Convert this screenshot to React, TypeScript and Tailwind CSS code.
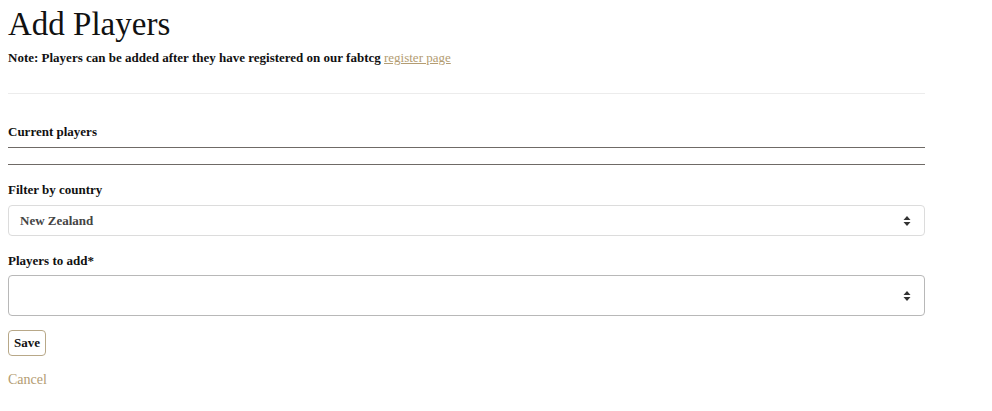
export default function App() {
  const serif = { fontFamily: '"Liberation Serif", "DejaVu Serif", serif' };
  return (
    <div className="min-h-[411px] bg-white text-[#111]" style={serif}>
      <div className="w-[925px] pl-2 pt-1">
        {/* HEADER */}
        <h1 className="text-[33px] leading-[40px]">Add Players</h1>
        <p className="mt-[4px] text-[13px] font-bold leading-5">
          Note: Players can be added after they have registered on our fabtcg{" "}
          <a href="#" className="font-normal text-[#b39c72] underline">
            register page
          </a>
        </p>

        <hr className="mt-[25px] border-t border-[#ececec]" />

        {/* CURRENT PLAYERS */}
        <p className="mt-[28px] text-[13px] font-bold leading-5">Current players</p>
        <div className="mt-[5px] h-px bg-[#6f6a66]" />
        <div className="mt-[16px] h-px bg-[#6f6a66]" />

        {/* FILTER */}
        <label className="mt-[15px] block text-[13px] font-bold leading-5">
          Filter by country
        </label>
        <div className="mt-[5px] flex h-[31px] items-center justify-between rounded border border-[#dcdcdc] pl-[11px] pr-3">
          <span className="text-[13px] font-bold text-[#444]">New Zealand</span>
          <Arrows />
        </div>

        <label className="mt-[15px] block text-[13px] font-bold leading-5">
          Players to add*
        </label>
        <div className="mt-[4px] flex h-[41px] items-center justify-end rounded border border-[#b8b8b8] px-3">
          <Arrows />
        </div>

        {/* ACTIONS */}
        <button className="mt-[14px] rounded-sm border border-[#b8a888] px-[5px] py-[3px] text-[13px] font-bold leading-[18px]">
          Save
        </button>
        <div className="mt-[11px]">
          <a href="#" className="text-[14px] text-[#b39c72]">
            Cancel
          </a>
        </div>
      </div>
    </div>
  );
}

function Arrows() {
  return (
    <svg width="8" height="10" viewBox="0 0 8 10" className="mr-[1px]">
      <path d="M4 0 L7.5 4 H0.5 Z" fill="#333" />
      <path d="M4 10 L7.5 6 H0.5 Z" fill="#333" />
    </svg>
  );
}
